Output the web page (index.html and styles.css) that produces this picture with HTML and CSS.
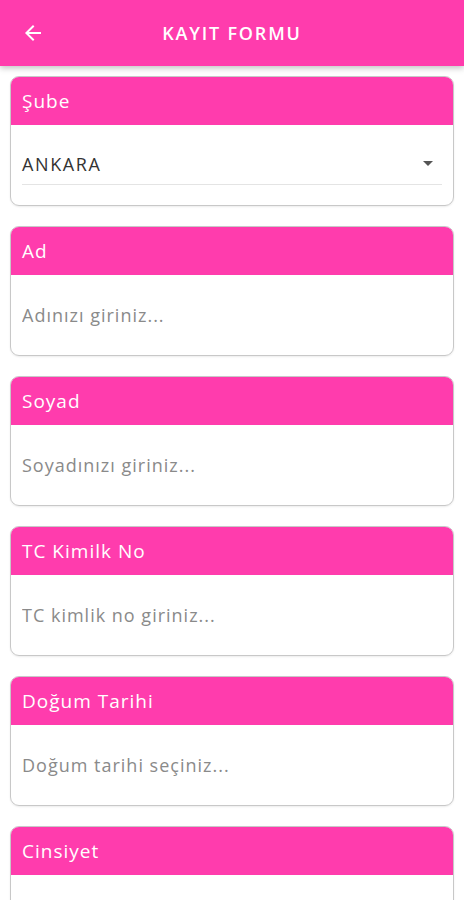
FILE: index.html
```html
<!DOCTYPE html>
<html lang="tr">

<head>
    <meta charset="UTF-8">
    <meta name="viewport" content="width=device-width, initial-scale=1.0">
    <title>Kayıt Formu</title>
    <link rel="stylesheet" href="styles.css">
</head>

<body>
    <div class="topbar">
        <button class="back" aria-label="Geri">
            <svg width="24" height="24" viewBox="0 0 24 24">
                <path d="M20 11H7.83l5.59-5.59L12 4l-8 8 8 8 1.41-1.41L7.83 13H20v-2z" fill="#fff"/>
            </svg>
        </button>
        <h1>KAYIT FORMU</h1>
    </div>

    <div class="form">
        <div class="card">
            <div class="card-head">Şube</div>
            <div class="card-body">
                <div class="select">
                    <span>ANKARA</span>
                    <span class="caret"></span>
                </div>
            </div>
        </div>

        <div class="card">
            <div class="card-head">Ad</div>
            <div class="card-body">
                <input type="text" placeholder="Adınızı giriniz...">
            </div>
        </div>

        <div class="card">
            <div class="card-head">Soyad</div>
            <div class="card-body">
                <input type="text" placeholder="Soyadınızı giriniz...">
            </div>
        </div>

        <div class="card">
            <div class="card-head">TC Kimilk No</div>
            <div class="card-body">
                <input type="text" placeholder="TC kimlik no giriniz...">
            </div>
        </div>

        <div class="card">
            <div class="card-head">Doğum Tarihi</div>
            <div class="card-body">
                <input type="text" placeholder="Doğum tarihi seçiniz...">
            </div>
        </div>

        <div class="card">
            <div class="card-head">Cinsiyet</div>
            <div class="card-body"></div>
        </div>
    </div>
</body>

</html>
```

FILE: styles.css
```css
body {
    margin: 0;
    font-family: "Open Sans", Arial, sans-serif;
    background-color: #fff;
    overflow: hidden;
}

.topbar {
    height: 66px;
    background-color: #ff3cad;
    box-shadow: 0 2px 6px rgba(0, 0, 0, 0.25);
    display: flex;
    align-items: center;
    justify-content: center;
    position: relative;
    z-index: 1;
}

.topbar h1 {
    margin: 0;
    color: #fff;
    font-size: 18px;
    font-weight: 600;
    letter-spacing: 1.8px;
}

.back {
    position: absolute;
    left: 21px;
    top: 21px;
    padding: 0;
    border: none;
    background: none;
    display: flex;
}

.form {
    padding: 10px 10px 0 10px;
    display: flex;
    flex-direction: column;
    gap: 20px;
}

.card {
    border: 1px solid #c8c8c8;
    border-radius: 9px;
    overflow: hidden;
    box-shadow: 0 1px 2px rgba(0, 0, 0, 0.08);
}

.card-head {
    height: 48px;
    background-color: #ff3cad;
    color: #fff;
    font-size: 19px;
    padding: 0 11px;
    display: flex;
    align-items: center;
    letter-spacing: 1px;
}

.card-body {
    height: 80px;
    padding: 0 11px;
    display: flex;
    align-items: center;
}

.select {
    flex: 1;
    height: 36px;
    border-bottom: 1px solid #e4e4e4;
    display: flex;
    align-items: center;
    justify-content: space-between;
    font-size: 18px;
    color: #333;
    letter-spacing: 1.6px;
    padding-bottom: 2px;
}

.caret {
    width: 0;
    height: 0;
    border-left: 5px solid transparent;
    border-right: 5px solid transparent;
    border-top: 5px solid #555;
    margin-right: 9px;
}

input[type="text"] {
    flex: 1;
    border: none;
    outline: none;
    padding: 0;
    font-family: inherit;
    font-size: 18px;
    color: #333;
    letter-spacing: 1px;
    background: transparent;
}

input::placeholder {
    color: #8a8a8a;
}
```
